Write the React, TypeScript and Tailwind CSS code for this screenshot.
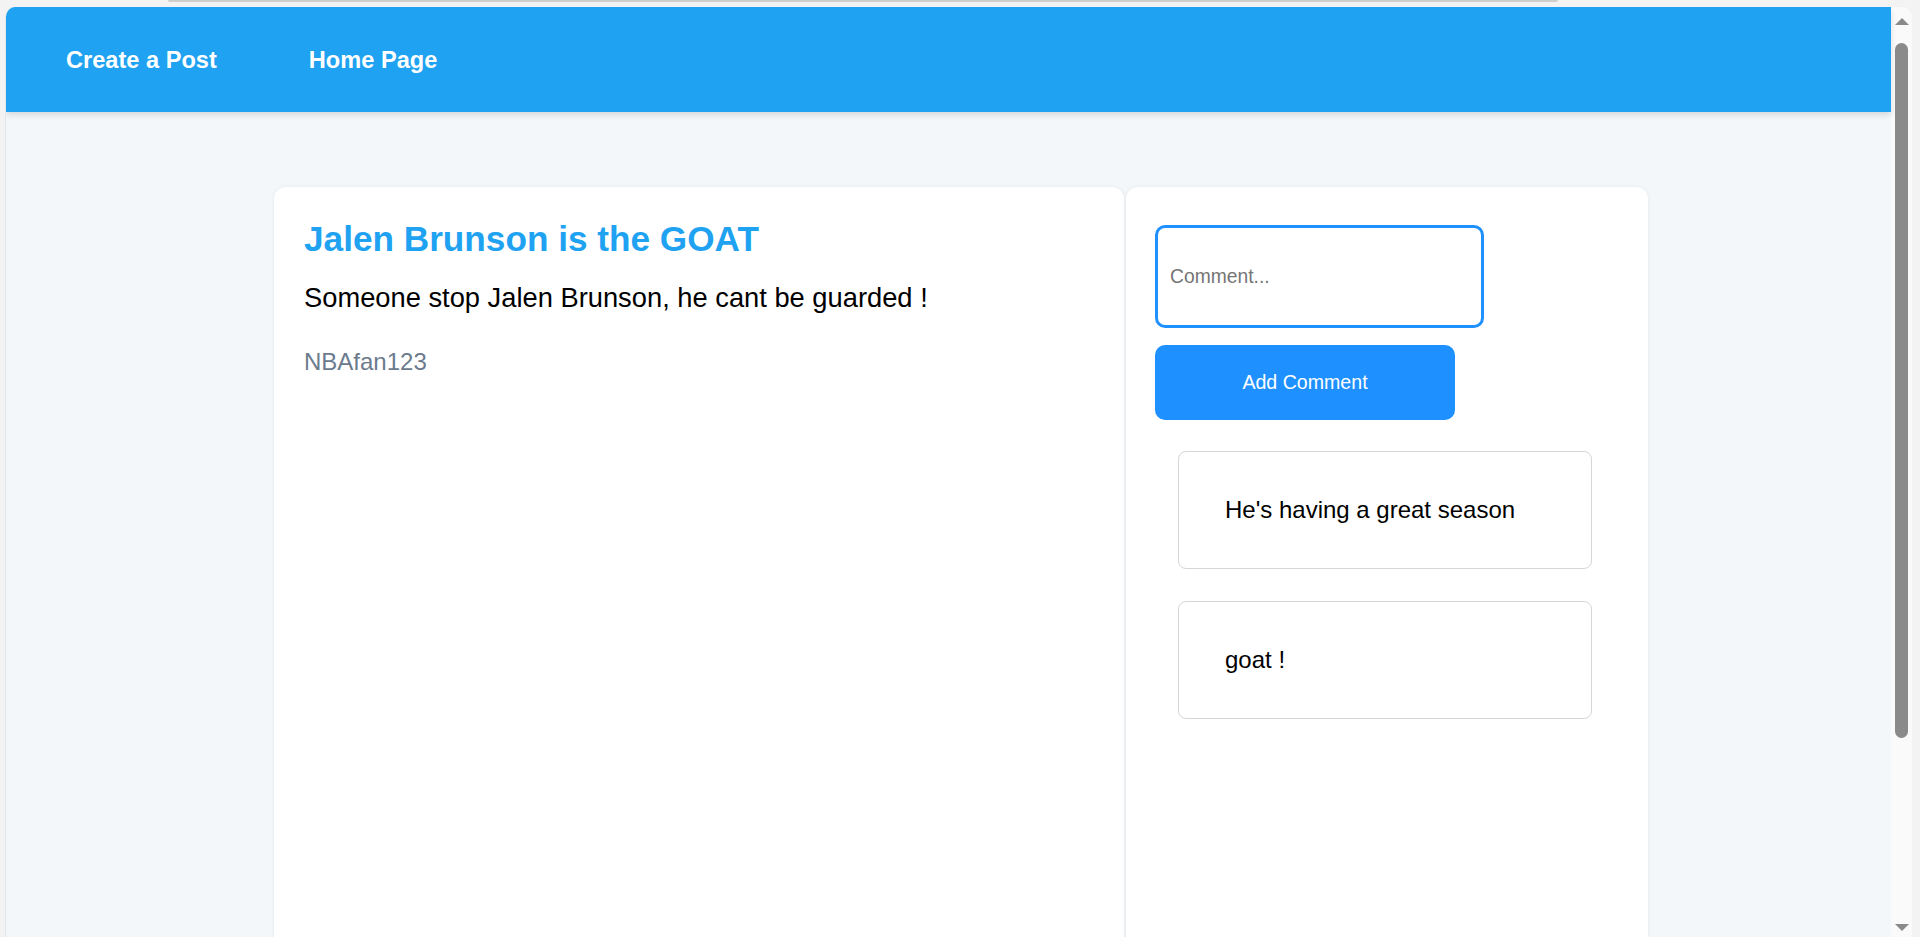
const comments = ["He's having a great season", 'goat !'];

function Scrollbar() {
  return (
    <div className="w-[21px] shrink-0 bg-[#fafafa] flex flex-col items-center">
      <div className="mt-[11px] w-0 h-0 border-l-[7px] border-r-[7px] border-b-[7px] border-l-transparent border-r-transparent border-b-[#8a8a8a]" />
      <div className="mt-[18px] w-[13px] h-[695px] rounded-full bg-[#8a8a8a]" />
      <div className="flex-1" />
      <div className="mb-[6px] w-0 h-0 border-l-[7px] border-r-[7px] border-t-[7px] border-l-transparent border-r-transparent border-t-[#8a8a8a]" />
    </div>
  );
}

export default function App() {
  return (
    <div
      className="relative w-[1920px] h-[937px] overflow-hidden bg-[#f3f3f3] pt-[7px] pl-[5px] pr-[8px] flex"
      style={{ fontFamily: '"Liberation Sans", Arial, sans-serif' }}
    >
      <div className="absolute top-0 left-[168px] w-[1390px] h-[2px] bg-[#cfcfcf] rounded-b" />
      <div className="flex-1 flex rounded-tl-[10px] rounded-tr-[10px] overflow-hidden border-l border-[#e6e6e6]">
        <div className="flex-1 flex flex-col bg-[#f3f7fa]">
          <nav className="h-[105px] shrink-0 bg-[#1fa2f1] flex items-center pl-[60px] pt-[2px] gap-[92px] shadow-[0_3px_6px_rgba(0,0,0,0.12)] relative z-10">
            <a className="text-white font-bold text-[23.6px] leading-none cursor-pointer">Create a Post</a>
            <a className="text-white font-bold text-[23.6px] leading-none cursor-pointer">Home Page</a>
          </nav>

          <div className="flex pt-[75px] pl-[268px] gap-[2px]">
            <div className="w-[850px] h-[900px] bg-white rounded-[12px] shadow-[0_0_4px_rgba(0,0,0,0.06)] px-[30px] pt-[34px]">
              <h1 className="text-[35.2px] leading-none font-bold text-[#1fa2f1]">Jalen Brunson is the GOAT</h1>
              <p className="mt-[28px] text-[27.3px] leading-none text-black">
                Someone stop Jalen Brunson, he cant be guarded !
              </p>
              <p className="mt-[38px] text-[24px] leading-none text-[#6b7b8d]">NBAfan123</p>
            </div>

            <div className="w-[522px] h-[900px] bg-white rounded-[12px] shadow-[0_0_4px_rgba(0,0,0,0.06)] pl-[29px] pt-[38px]">
              <input
                placeholder="Comment..."
                className="block w-[329px] h-[103px] border-[3px] border-[#1e90ff] rounded-[10px] px-[12px] text-[19.3px] text-black placeholder:text-[#757575] outline-none bg-white"
              />
              <button className="mt-[17px] w-[300px] h-[75px] bg-[#1e90ff] rounded-[10px] text-white text-[19.6px]">
                Add Comment
              </button>
              <div className="mt-[31px] ml-[23px] flex flex-col gap-[32px]">
                {comments.map((c) => (
                  <div
                    key={c}
                    className="w-[414px] h-[118px] border border-[#d6d6d6] rounded-[8px] flex items-center pl-[46px]"
                  >
                    <span className="text-[24px] leading-none text-black">{c}</span>
                  </div>
                ))}
              </div>
            </div>
          </div>
        </div>
        <Scrollbar />
      </div>
    </div>
  );
}
